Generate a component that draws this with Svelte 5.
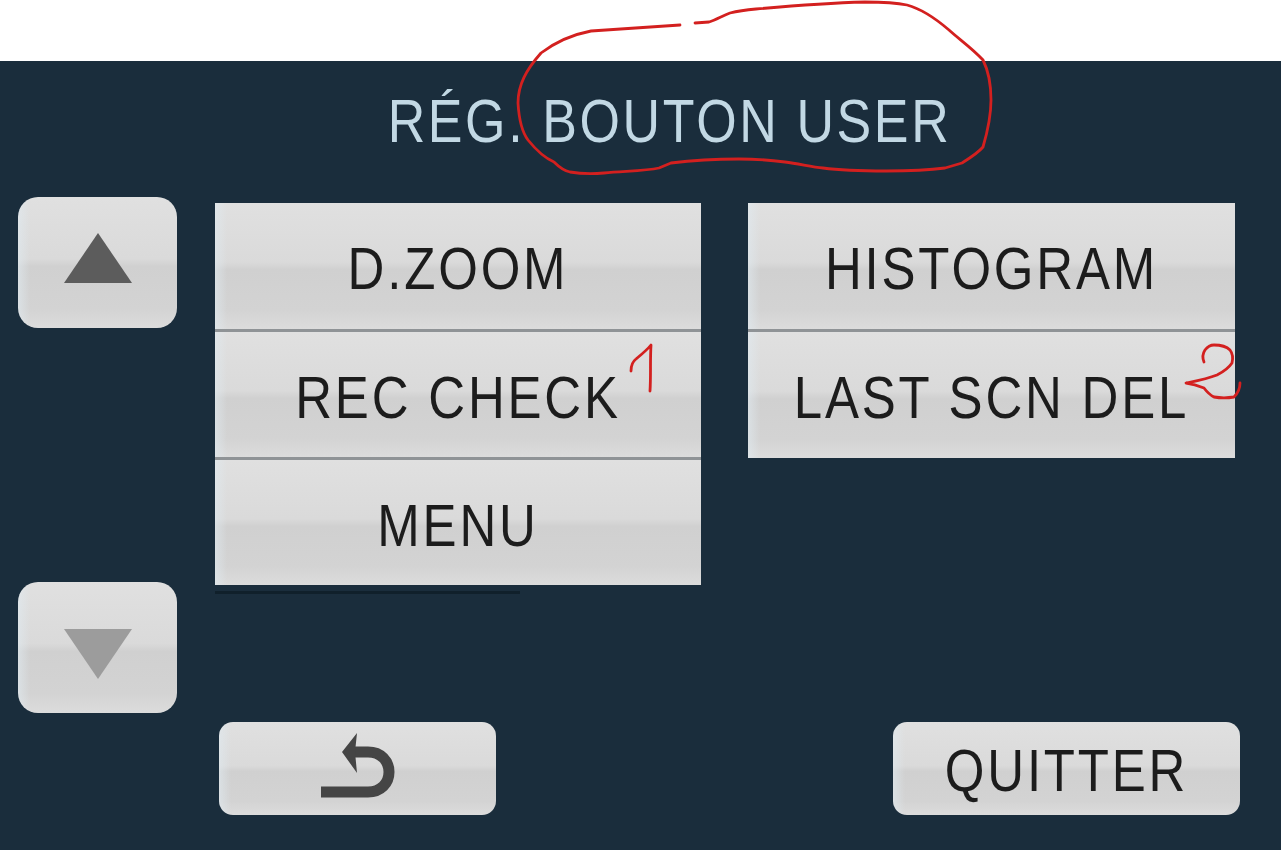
<script>
  let leftKeys = ["D.ZOOM", "REC CHECK", "MENU"];
  let rightKeys = ["HISTOGRAM", "LAST SCN DEL"];
</script>

<div class="page">
  <div class="screen">
    <h1 class="title"><span>RÉG. BOUTON USER</span></h1>

    <div class="main">
      <div class="arrows">
        <button class="key arrow up" aria-label="Up">
          <svg width="70" height="50" viewBox="0 0 70 50"><path d="M35 0 L69 50 L1 50 Z" fill="#5c5c5c" /></svg>
        </button>
        <button class="key arrow down" aria-label="Down">
          <svg width="70" height="50" viewBox="0 0 70 50"><path d="M1 0 L69 0 L35 50 Z" fill="#9c9c9c" /></svg>
        </button>
      </div>

      <div class="list left">
        {#each leftKeys as label}
          <button class="key item"><span>{label}</span></button>
        {/each}
      </div>

      <div class="list right">
        {#each rightKeys as label}
          <button class="key item"><span>{label}</span></button>
        {/each}
      </div>
    </div>

    <div class="bottom">
      <button class="key foot back" aria-label="Back">
        <svg width="76" height="66" viewBox="0 0 76 66">
          <path d="M1 59 H48 C61 59 69 50 69 39 C69 28 61 19 48 19 H30" fill="none" stroke="#454545" stroke-width="11" />
          <path d="M37 0 L22 19 L37 40 L35 19 Z" fill="#454545" />
        </svg>
      </button>
      <button class="key foot quit"><span>QUITTER</span></button>
    </div>
  </div>

  <svg class="ink" width="1281" height="850" viewBox="0 0 1281 850" fill="none" stroke="#d3201f" stroke-width="2.8" stroke-linecap="round" stroke-linejoin="round">
    <path d="M680 25 L591 31 C570 35 553 44 541 53 C526 70 518 85 518 103 C519 120 522 132 528 140 C536 150 545 158 554 162 C560 168 565 171 570 172 C582 174 592 174 604 173 C625 171 645 171 659 168 L671 163 C695 160 718 159 739 159 C755 159 770 160 785 162 C800 164 812 167 823 168 C845 171 865 171 886 171 C910 171 930 170 945 168 L962 163 C970 158 978 153 983 147 C988 130 991 115 991 100 C991 85 989 72 983 60 C972 48 960 40 949 30 C935 18 922 9 907 5 C893 2 880 2 865 2 C830 3 790 6 756 9 C745 10 738 11 730 13 C722 16 716 20 709 22 L695 23" />
    <path d="M631 371 C631 365 632 362 636 359 C642 354 647 350 651 345 C650 360 651 376 650 391" />
    <path d="M1204 362 C1202 357 1203 353 1205 350 C1208 346 1211 345 1214 345 C1221 345 1227 347 1230 350 C1233 354 1233 359 1232 363 C1228 369 1223 372 1217 375 C1207 379 1196 381 1186 383 C1193 384 1199 386 1204 388 C1207 392 1210 395 1214 397 C1220 398 1228 398 1234 397 C1238 393 1240 388 1240 383" />
  </svg>
</div>

<style>
  :global(body) {
    background: #fff;
    font-family: "Liberation Sans", Arial, sans-serif;
  }

  .page {
    position: relative;
    width: 1281px;
    height: 850px;
    overflow: hidden;
    padding-top: 61px;
    box-sizing: border-box;
  }

  .screen {
    height: 789px;
    background: #1a2d3c;
    display: flex;
    flex-direction: column;
  }

  .title {
    margin: 0;
    height: 136px;
    box-sizing: border-box;
    padding: 25px 0 0 58px;
    text-align: center;
    font-size: 52px;
    line-height: 70px;
    font-weight: 400;
    letter-spacing: 2.6px;
    color: #c2d8e4;
  }

  .title span {
    display: inline-block;
    transform: scaleY(1.18);
  }

  .main {
    display: flex;
    padding-left: 18px;
    height: 525px;
  }

  .arrows {
    width: 159px;
    height: 516px;
    margin-right: 38px;
    display: flex;
    flex-direction: column;
    justify-content: space-between;
  }

  .list {
    width: 486px;
    padding-top: 6px;
    display: flex;
    flex-direction: column;
  }

  .left {
    margin-right: 47px;
  }

  .right {
    width: 487px;
  }

  .key {
    display: flex;
    align-items: center;
    justify-content: center;
    border: 0;
    padding: 0;
    font-family: inherit;
    color: #1c1c1c;
    background:
      linear-gradient(90deg, rgba(224, 234, 240, 0.6), rgba(224, 234, 240, 0) 12px),
      linear-gradient(180deg, #e0e0e0 0%, #dadada 47%, #d0d0d0 53%, #d3d3d3 85%, #dcdcdc 100%);
  }

  .arrow {
    height: 131px;
    border-radius: 20px;
  }

  .up {
    padding-bottom: 9px;
  }

  .down {
    padding-top: 13px;
  }

  .item {
    height: 128px;
    padding-top: 5px;
    font-size: 51px;
    letter-spacing: 2.8px;
    border-bottom: 3px solid #8f9396;
    box-sizing: border-box;
  }

  .item:first-child {
    height: 129px;
  }

  .item:last-child {
    height: 126px;
    border-bottom: 0;
  }

  .left .item:last-child {
    position: relative;
    height: 125px;
  }

  .left .item:last-child::after {
    content: "";
    position: absolute;
    left: 0;
    top: 131px;
    width: 305px;
    height: 3px;
    background: #10202b;
  }

  .key span {
    display: inline-block;
    transform: scaleY(1.15);
  }

  .bottom {
    display: flex;
    justify-content: space-between;
    padding: 0 41px 0 219px;
  }

  .foot {
    height: 93px;
    border-radius: 14px;
    font-size: 51px;
    letter-spacing: 2.8px;
  }

  .back {
    width: 277px;
    padding-bottom: 6px;
  }

  .quit {
    width: 347px;
    padding-top: 4px;
  }

  .ink {
    position: absolute;
    inset: 0;
    pointer-events: none;
  }
</style>
